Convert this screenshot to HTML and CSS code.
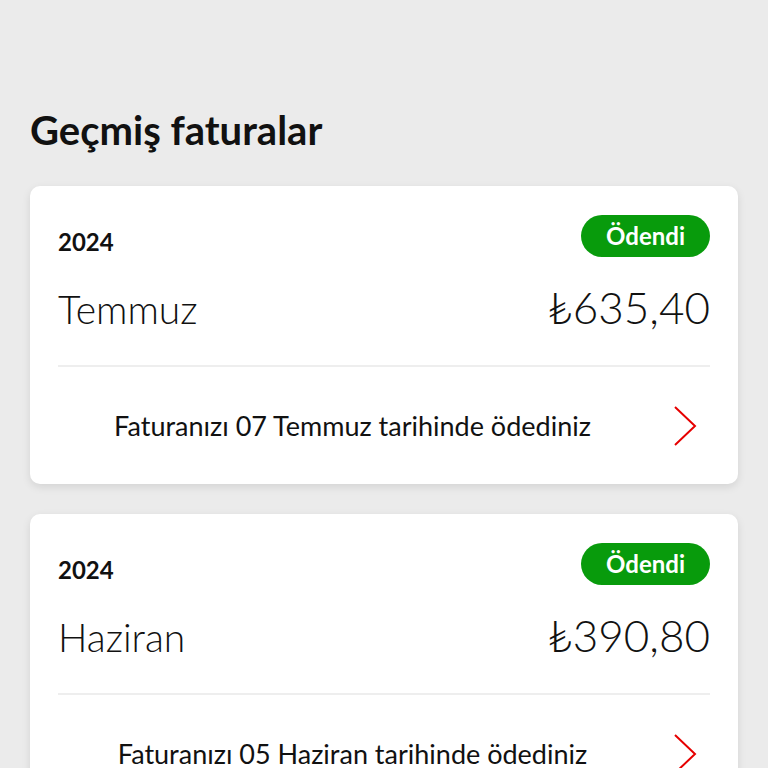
FILE: index.html
```html
<!DOCTYPE html>
<html lang="tr">
<head>
  <meta charset="UTF-8" />
  <title>Geçmiş faturalar</title>
  <link rel="stylesheet" href="styles.css">
</head>
<body>
  <h1 class="page-title">Geçmiş faturalar</h1>

  <div class="bill-card">
    <div class="bill-top">
      <span class="bill-year">2024</span>
      <span class="badge">Ödendi</span>
    </div>
    <div class="bill-main">
      <span class="bill-month">Temmuz</span>
      <span class="bill-amount">₺635,40</span>
    </div>
    <div class="bill-footer">
      <span class="bill-note">Faturanızı 07 Temmuz tarihinde ödediniz</span>
      <svg class="chevron" width="24" height="42" viewBox="0 0 24 42">
        <path d="M2 2 L22 21 L2 40" fill="none" stroke="#e60000" stroke-width="2" />
      </svg>
    </div>
  </div>

  <div class="bill-card">
    <div class="bill-top">
      <span class="bill-year">2024</span>
      <span class="badge">Ödendi</span>
    </div>
    <div class="bill-main">
      <span class="bill-month">Haziran</span>
      <span class="bill-amount">₺390,80</span>
    </div>
    <div class="bill-footer">
      <span class="bill-note">Faturanızı 05 Haziran tarihinde ödediniz</span>
      <svg class="chevron" width="24" height="42" viewBox="0 0 24 42">
        <path d="M2 2 L22 21 L2 40" fill="none" stroke="#e60000" stroke-width="2" />
      </svg>
    </div>
  </div>
</body>
</html>
```

FILE: styles.css
```css
body {
  margin: 0;
  padding: 0 30px;
  background: #ebebeb;
  color: #111;
  font-family: 'Lato', 'Open Sans', sans-serif;
}
.page-title {
  margin: 0;
  padding-top: 106px;
  font-size: 40px;
  font-weight: 700;
  line-height: 48px;
  margin-bottom: 32px;
}
.bill-card {
  background: #fff;
  border-radius: 10px;
  box-shadow: 0 3px 8px rgba(0, 0, 0, 0.1);
  padding: 29px 28px 0;
  margin-bottom: 30px;
}
.bill-top {
  display: flex;
  justify-content: space-between;
  align-items: flex-end;
}
.bill-year {
  font-size: 24px;
  font-weight: 700;
  line-height: 28px;
  margin-bottom: 1px;
}
.badge {
  background: #089b0c;
  color: #fff;
  font-size: 24px;
  font-weight: 700;
  line-height: 42px;
  padding: 0 25px;
  border-radius: 21px;
}
.bill-main {
  display: flex;
  justify-content: space-between;
  align-items: baseline;
  margin-top: 24px;
  padding: 0 0 32px;
  border-bottom: 2px solid #eeeeee;
}
.bill-month {
  font-size: 39px;
  font-weight: 300;
}
.bill-amount {
  font-size: 44px;
  font-weight: 300;
}
.bill-footer {
  display: flex;
  align-items: center;
  height: 117px;
}
.bill-note {
  flex: 1;
  text-align: center;
  font-size: 27px;
}
.chevron {
  margin: 0 13px 0 26px;
}
```
